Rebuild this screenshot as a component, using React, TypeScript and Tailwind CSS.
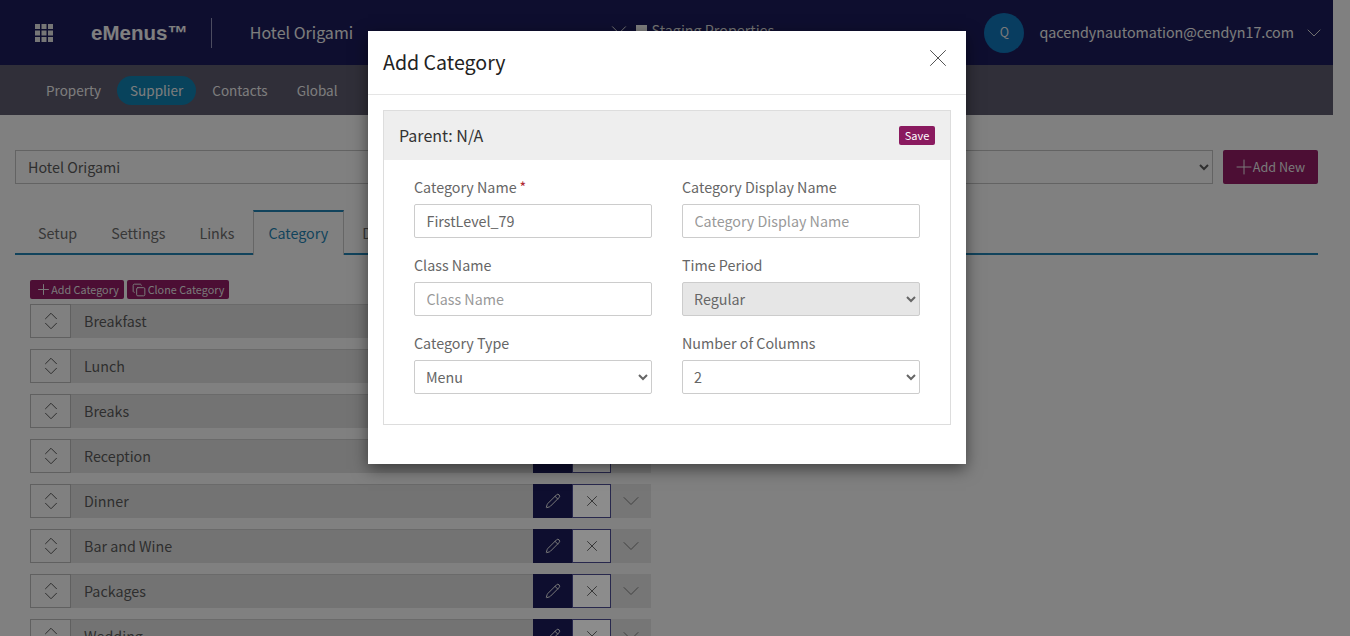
import React from "react";
import { ChevronDown, ChevronUp, Copy, Pencil, Plus, X } from "lucide-react";

const categories = ["Breakfast", "Lunch", "Breaks", "Reception", "Dinner", "Bar and Wine", "Packages", "Wedding"];

function GridIcon() {
  return (
    <svg width="18" height="18" viewBox="0 0 18 18" fill="#d8d8d8">
      {[0, 6.5, 13].map((y) =>
        [0, 6.5, 13].map((x) => <rect key={`${x}-${y}`} x={x} y={y} width="5" height="5" />)
      )}
    </svg>
  );
}

function TopBar() {
  return (
    <div className="flex h-[65px] items-center bg-[#1b1b56] text-[#e4e4e4]">
      <div className="flex h-full w-[73px] items-center justify-center pr-[1px] pl-[15px]">
        <GridIcon />
      </div>
      <span className="ml-[18px] font-['Liberation_Sans',sans-serif] text-[20.5px] leading-[24px] font-bold text-[#e8e8e8]">eMenus™</span>
      <div className="ml-[23px] h-[30px] w-px bg-[#8a8ab0]" />
      <span className="ml-[38px] pb-[2px] text-[16px] leading-[24px]">Hotel Origami</span>
      <div className="ml-[253px] flex items-center pb-[5px] text-[#d0d0d0]">
        <ChevronDown size={26} strokeWidth={1} absoluteStrokeWidth />
        <div className="ml-[3.5px] h-[11px] w-[11px] bg-[#e4e4e4]" />
        <span className="ml-[5px] text-[14.3px] leading-[24px]">Staging Properties</span>
      </div>
      <div className="ml-auto flex h-[40px] w-[40px] items-center justify-center rounded-full bg-[#0f6fb0] text-[12.5px] text-[#ddd]">Q</div>
      <span className="ml-[15px] pb-[2px] text-[14.3px] leading-[24px]">qacendynautomation@cendyn17.com</span>
      <ChevronDown size={24} strokeWidth={1} absoluteStrokeWidth className="mr-[7px] ml-[8px] text-[#ccc]" />
    </div>
  );
}

function SubNav() {
  return (
    <div className="flex h-[50px] items-center gap-[3px] bg-[#585668] pl-[33px] text-[13.5px] leading-[24px] text-[#e4e4e4]">
      <span className="px-[13px]">Property</span>
      <span className="flex h-[29px] items-center rounded-full bg-[#0f7aa8] px-[13px]">Supplier</span>
      <span className="px-[13px]">Contacts</span>
      <span className="px-[13px]">Global</span>
    </div>
  );
}

function Tabs() {
  return (
    <div className="mt-[26px] flex h-[45px] gap-[2px] border-b-2 border-[#1f7ba8] pl-[7px] text-[14.3px] text-[#666]">
      <span className="px-4 pt-[11px] leading-[24px]">Setup</span>
      <span className="px-4 pt-[11px] leading-[24px]">Settings</span>
      <span className="px-4 pt-[11px] leading-[24px]">Links</span>
      <span className="-mb-[2px] ml-[1px] h-[45px] border-x border-t-2 border-x-[#bbb] border-t-[#1f7ba8] bg-[#e9e9e9] pt-[9px] pr-[15px] pl-[14px] leading-[24px] text-[#1f7ba8]">Category</span>
      <span className="px-4 pt-[11px] leading-[24px]">Display</span>
    </div>
  );
}

function CategoryRow({ name }: { name: string }) {
  return (
    <div className="mb-[11px] flex h-[34px] w-[621px]">
      <div className="flex w-[41px] flex-col items-center justify-center border border-[#b0b0b0] text-[#555]">
        <ChevronUp size={22} strokeWidth={1} absoluteStrokeWidth className="-mt-[5px] -mb-[6px]" />
        <ChevronDown size={22} strokeWidth={1} absoluteStrokeWidth className="-mt-[6px] -mb-[5px]" />
      </div>
      <div className="flex w-[462px] items-center border-t border-[#c2c2c2] bg-[#d2d2d2] pb-[2px] pl-[13px] text-[14.3px] text-[#555]">{name}</div>
      <div className="flex w-[39px] items-center justify-center bg-[#1b1b56] text-[#ddd]">
        <Pencil size={16} strokeWidth={1} absoluteStrokeWidth />
      </div>
      <div className="flex w-[39px] items-center justify-center border border-[#4a4a8c] bg-white text-[#666]">
        <X size={18} strokeWidth={1} absoluteStrokeWidth />
      </div>
      <div className="flex w-[40px] items-center justify-center bg-[#d8d8d8] text-[#777]">
        <ChevronDown size={28} strokeWidth={1} absoluteStrokeWidth />
      </div>
    </div>
  );
}

function Field({ label, required, children }: { label: string; required?: boolean; children: React.ReactNode }) {
  return (
    <div className="mb-[15px]">
      <div className="mb-[5px] text-[14.3px] leading-[24px] text-[#666]">
        {label}
        {required && <span className="ml-[3px] text-[#b02a37]">*</span>}
      </div>
      {children}
    </div>
  );
}

const inputClass =
  "block h-[34px] w-full rounded-[2px] border border-[#ccc] bg-white px-[11.5px] pb-[2px] text-[14.3px] text-[#666] placeholder:text-[#999]";
const selectClass =
  "block h-[34px] w-full rounded-[2px] border border-[#ccc] bg-white px-[7px] pb-[2px] text-[14.3px] text-[#666]";

function AddCategoryModal() {
  return (
    <div className="absolute top-[31px] left-[368px] h-[433px] w-[598px] bg-white shadow-[0_5px_15px_rgba(0,0,0,0.5)]">
      <div className="flex h-[64px] items-start justify-between border-b border-[#e5e5e5] pr-[13px] pl-[15px]">
        <span className="mt-[15px] text-[19.6px] leading-[32px] text-[#222]">Add Category</span>
        <X size={30} strokeWidth={1} absoluteStrokeWidth className="mt-[12px] text-[#555]" />
      </div>
      <div className="mx-[15px] mt-[15px] border border-[#ddd]">
        <div className="flex h-[49px] items-center justify-between bg-[#eee] px-[15px]">
          <span className="pb-[2px] text-[16px] leading-[24px] text-[#333]">Parent: N/A</span>
          <button className="flex h-[19px] w-[36px] items-center justify-center rounded-[2px] bg-[#8a1a5f] text-[11px] leading-none text-white">Save</button>
        </div>
        <div className="grid grid-cols-2 gap-x-[30px] px-[30px] pt-[15px] pb-[15px]">
          <Field label="Category Name" required>
            <input className={inputClass} defaultValue="FirstLevel_79" />
          </Field>
          <Field label="Category Display Name">
            <input className={inputClass} placeholder="Category Display Name" />
          </Field>
          <Field label="Class Name">
            <input className={inputClass} placeholder="Class Name" />
          </Field>
          <Field label="Time Period">
            <select disabled className={`${selectClass} disabled:bg-[#e6e6e6] disabled:opacity-100`} defaultValue="Regular">
              <option>Regular</option>
            </select>
          </Field>
          <Field label="Category Type">
            <select className={selectClass} defaultValue="Menu">
              <option>Menu</option>
            </select>
          </Field>
          <Field label="Number of Columns">
            <select className={selectClass} defaultValue="2">
              <option>2</option>
            </select>
          </Field>
        </div>
      </div>
    </div>
  );
}

export default function App() {
  return (
    <div className="relative h-[636px] w-full overflow-hidden bg-[#e9e9e9] font-['Noto_Sans_CJK_JP','Liberation_Sans',sans-serif]">
      <div className="w-[1333px]">
        <TopBar />
        <SubNav />
        <div className="px-[15px] pt-[35px]">
          <div className="flex gap-[10px]">
            <select className="h-[34px] flex-1 border border-[#b5b5b5] bg-[#e9e9e9] px-2 pb-[2px] text-[14.3px] text-[#555]" defaultValue="Hotel Origami">
              <option>Hotel Origami</option>
            </select>
            <button className="flex h-[34px] w-[95px] items-center justify-center rounded-[2px] bg-[#8a1a5f] text-[12.6px] text-[#ddd]">
              <Plus size={24} strokeWidth={1} absoluteStrokeWidth className="-mr-[3px] -ml-[4px]" />
              Add New
            </button>
          </div>
          <Tabs />
          <div className="mt-[25px] ml-[15px] flex gap-[3px]">
            <button className="flex h-[19px] w-[94px] items-center justify-center rounded-[2px] bg-[#8a1a5f] text-[10.8px] leading-none text-[#ddd]">
              <Plus size={17} strokeWidth={1} absoluteStrokeWidth className="-mr-[1px]" />
              Add Category
            </button>
            <button className="flex h-[19px] w-[102px] items-center justify-center gap-[2px] rounded-[2px] bg-[#8a1a5f] text-[10.8px] leading-none text-[#ddd]">
              <Copy size={14} strokeWidth={1} absoluteStrokeWidth />
              Clone Category
            </button>
          </div>
          <div className="mt-[5px] ml-[15px]">
            {categories.map((name) => (
              <CategoryRow key={name} name={name} />
            ))}
          </div>
        </div>
      </div>
      <div className="absolute inset-0 bg-black/45" />
      <AddCategoryModal />
    </div>
  );
}
